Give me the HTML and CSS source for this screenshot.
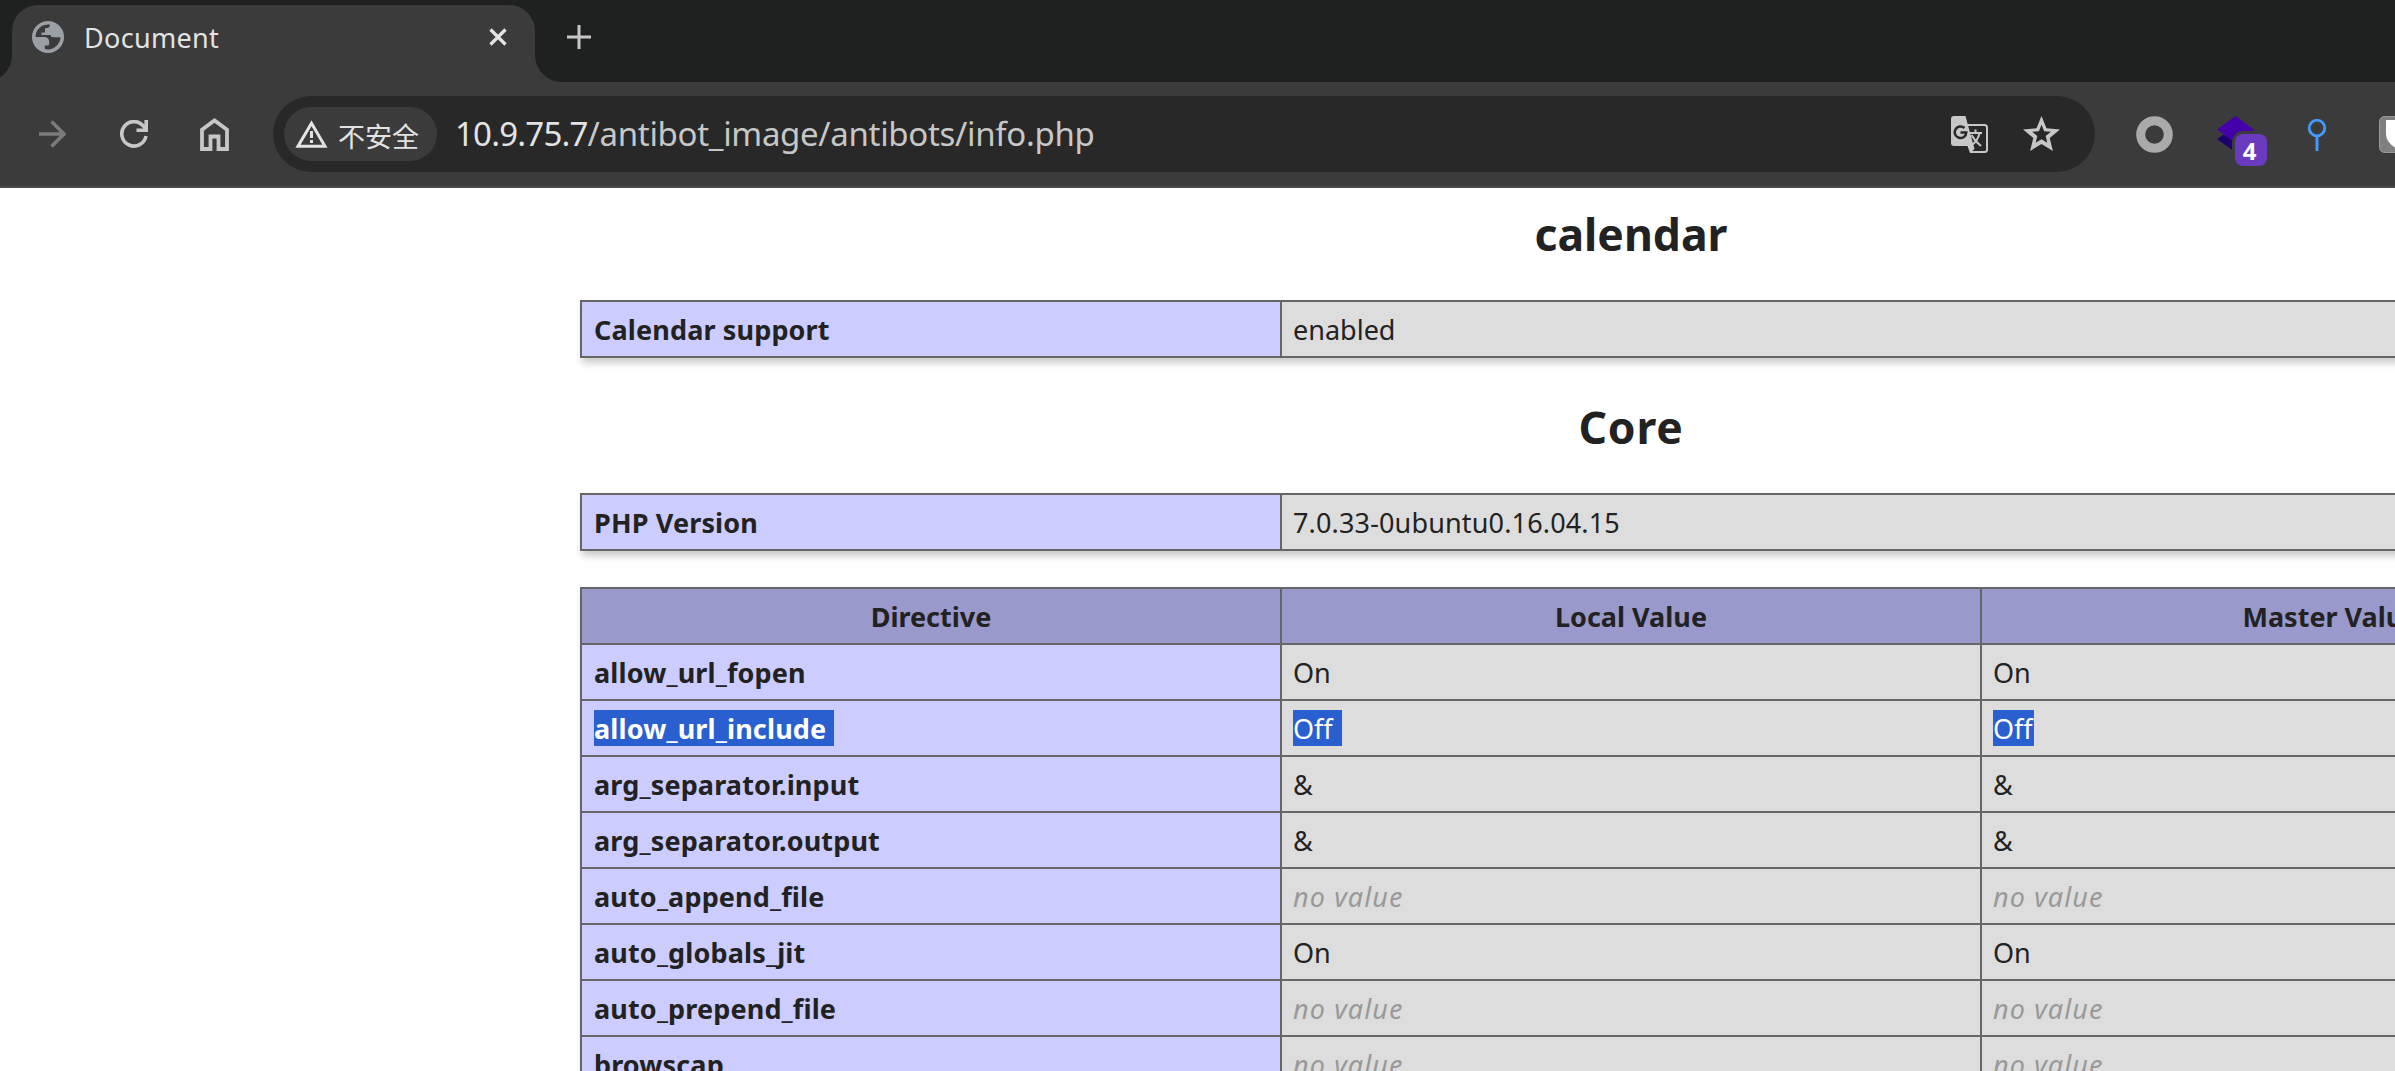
FILE: index.html
```html
<!DOCTYPE html>
<html lang="zh-CN">
<head>
<meta charset="utf-8">
<title>Document</title>
<link rel="stylesheet" href="styles.css">
</head>
<body>
<header class="browser">
  <div class="tabstrip">
    <div class="tab">
      <svg class="favicon" width="32" height="32" viewBox="0 0 32 32"><circle cx="16" cy="16" r="16" fill="#9aa0a6"/><path fill="#3b3b3b" d="M3.5 16A12.6 12.6 0 0 1 17.8 3.5V5.6Q17.5 7 15.5 7H14Q13 7.2 13 8.6V11.4H9.6V14H18.4Q19 16.2 21.5 16.2H28.5A12.6 12.6 0 0 1 12.8 28V24.6H15.6Q17.2 24.4 17.2 22.8V20.6Q17 16.6 12.8 16Z"/><path fill="#9aa0a6" d="M13 11.4H17.5Q19.2 11.6 19.2 14V16H28.5Q28.3 10 24 7L19.4 5.4 17.8 5.6Q17.5 7 15.5 7L13 8Z"/></svg>
      <span class="tab-title">Document</span>
      <svg class="tab-close" width="18" height="18" viewBox="0 0 18 18"><path d="M1.5 1.5l15 15M16.500 1.500l-15 15" stroke="#e3e3e3" stroke-width="3.200"/></svg>
    </div>
    <svg class="new-tab" width="24" height="24" viewBox="0 0 24 24"><path d="M12 0v24M0 12h24" stroke="#c7c7c7" stroke-width="3"/></svg>
  </div>
  <div class="toolbar">
    <svg class="forward" width="28" height="28" viewBox="0 0 28 28"><path d="M1 14h25M13.500 1.500L26 14 13.500 26.500" fill="none" stroke="#7b7b7b" stroke-width="3.600"/></svg>
    <svg class="reload" width="28" height="28" viewBox="0 0 28 28"><path d="M26 16A12.200 12.200 0 1 1 23.500 6.200L26 9.500" fill="none" stroke="#c7c7c7" stroke-width="3.600"/><path d="M28 0V12H16.500V8.600H24.400V0z" fill="#c7c7c7"/></svg>
    <svg class="home" width="29" height="33" viewBox="0 0 29 33"><path d="M2 31V11.700L14.500 2.400 27 11.700V31H18.500V18.500H10.500V31z" fill="none" stroke="#c7c7c7" stroke-width="3.800"/></svg>
    <div class="omnibox">
      <div class="chip">
        <svg width="33" height="28" viewBox="0 0 33 28"><path d="M16.500 3.200L30 26.300H3z" fill="none" stroke="#e3e3e3" stroke-width="3"/><path d="M15 11h3v7h-3zM15 20h3v3h-3z" fill="#e3e3e3"/></svg>
        <span class="chip-text">不安全</span>
      </div>
      <div class="url"><span class="host">10.9.75.7</span><span class="path">/antibot_image/antibots/info.php</span></div>
      <svg class="translate" width="37" height="37" viewBox="0 0 37 37"><path d="M15 9H33.500Q36 9 36 11.500V33.500Q36 36 33.500 36H19" fill="none" stroke="#c7c7c7" stroke-width="2"/><path d="M3 0H14.500L23.500 33 19 37 16.500 30H3Q0 30 0 27V3Q0 0 3 0z" fill="#c7c7c7"/><path d="M13.500 12A5.800 5.800 0 1 0 15.300 16.500H9.500" fill="none" stroke="#282828" stroke-width="2.500"/><path d="M18.500 17H31M24.500 13.500V17M28.500 17.500Q26.500 25 21 29M20.500 19Q24 25.500 30 30" fill="none" stroke="#c7c7c7" stroke-width="2"/></svg>
      <svg class="star" width="37" height="35" viewBox="0 0 37 35"><path fill="#c7c7c7" fill-rule="evenodd" d="M18.500 0L23.500 12.300 37 13.400 26.700 22 29.900 35 18.500 28.100 7.100 35 10.300 22 0 13.400 13.500 12.300zM18.500 8.800L15.900 15.200 9.200 15.700 14.300 20 12.700 26.700 18.500 23.200 24.300 26.700 22.700 20 27.800 15.700 21.100 15.200z"/></svg>
    </div>
    <svg class="ext-ring" width="37" height="37" viewBox="0 0 37 37"><circle cx="18.500" cy="18.500" r="13.800" fill="none" stroke="#aaa" stroke-width="9"/></svg>
    <div class="ext-layers">
      <svg width="37" height="36" viewBox="0 0 37 36"><path d="M0 23L6 19 30 24 18 36z" fill="#1c0070"/><path d="M18.500 0L37 13.500 18.500 27 0 13.500z" fill="#4400aa"/></svg>
      <span class="badge">4</span>
    </div>
    <svg class="ext-pin" width="20" height="34" viewBox="0 0 20 34"><circle cx="10" cy="10" r="7.800" fill="none" stroke="#419bff" stroke-width="2.800"/><path d="M10 18V33" stroke="#419bff" stroke-width="3"/></svg>
    <svg class="ext-shield" width="37" height="37" viewBox="0 0 37 37"><rect x=".5" y=".5" width="36" height="36" rx="5" fill="#808080" stroke="#999"/><path d="M7 4H30V18Q29 27 18.500 33 7 27 7 18z" fill="#fff"/></svg>
  </div>
</header>
<main class="info">
  <h2>calendar</h2>
  <table>
    <tr><td class="e">Calendar support</td><td class="v wide">enabled</td></tr>
  </table>
  <h2 class="core">Core</h2>
  <table>
    <tr><td class="e">PHP Version</td><td class="v wide version">7.0.33-0ubuntu0.16.04.15</td></tr>
  </table>
  <table>
    <tr class="h"><th>Directive</th><th>Local Value</th><th>Master Value</th></tr>
    <tr><td class="e">allow_url_fopen</td><td class="v">On</td><td class="v">On</td></tr>
    <tr><td class="e"><span class="sel sel-name">allow_url_include</span></td><td class="v"><span class="sel sel-value">Off</span></td><td class="v"><span class="sel">Off</span></td></tr>
    <tr><td class="e">arg_separator.input</td><td class="v">&amp;</td><td class="v">&amp;</td></tr>
    <tr><td class="e">arg_separator.output</td><td class="v">&amp;</td><td class="v">&amp;</td></tr>
    <tr><td class="e">auto_append_file</td><td class="v"><i>no value</i></td><td class="v"><i>no value</i></td></tr>
    <tr><td class="e">auto_globals_jit</td><td class="v">On</td><td class="v">On</td></tr>
    <tr><td class="e">auto_prepend_file</td><td class="v"><i>no value</i></td><td class="v"><i>no value</i></td></tr>
    <tr><td class="e">browscap</td><td class="v"><i>no value</i></td><td class="v"><i>no value</i></td></tr>
  </table>
</main>
</body>
</html>
```
FILE: styles.css
```css
* { box-sizing: border-box; }
html, body { height: 100%; }
body {
  margin: 0;
  overflow: hidden;
  background: #fff;
  color: #222;
  font-family: "Noto Sans", "Noto Sans CJK SC", sans-serif;
  font-size: 27px;
}
svg { display: block; flex: none; }

/* Browser chrome */
.tabstrip {
  display: flex;
  height: 82px;
  padding: 5px 0 0 12px;
  background: #1f2120;
  overflow: hidden;
}
.tab {
  position: relative;
  display: flex;
  align-items: center;
  width: 523px;
  height: 77px;
  padding: 0 28px 13px 20px;
  border-radius: 26px 26px 0 0;
  background: #3b3b3b;
}
.tab::before, .tab::after {
  content: "";
  position: absolute;
  bottom: 0;
  width: 27px;
  height: 27px;
}
.tab::before { left: -27px; background: radial-gradient(circle at 0 0, transparent 26.5px, #3b3b3b 27.5px); }
.tab::after { right: -27px; background: radial-gradient(circle at 100% 0, transparent 26.5px, #3b3b3b 27.5px); }
.tab-title {
  flex: 1;
  margin: 2px 0 0 20px;
  color: #e3e3e3;
  line-height: 36px;
  letter-spacing: .3px;
}
.new-tab { margin: 20px 0 0 32px; }
.toolbar {
  display: flex;
  align-items: center;
  height: 106px;
  padding-left: 38px;
  border-bottom: 2px solid #4a4a4a;
  background: #3b3b3b;
}
.reload { margin-left: 54px; }
.home { margin-left: 52px; }
.omnibox {
  display: flex;
  flex: none;
  align-items: center;
  width: 1822px;
  height: 76px;
  margin-left: 44px;
  padding: 0 35px 0 11px;
  border-radius: 38px;
  background: #282828;
}
.chip {
  display: flex;
  align-items: center;
  width: 153px;
  height: 54px;
  padding-left: 11px;
  border-radius: 27px;
  background: #3b3b3b;
}
.chip-text {
  margin: 4px 0 0 10px;
  color: #e3e3e3;
  font-family: "Noto Sans CJK SC", sans-serif;
  line-height: 36px;
  white-space: nowrap;
}
.url {
  flex: 1;
  margin-left: 18px;
  font-size: 33px;
  line-height: 46px;
  white-space: nowrap;
}
.host { color: #e3e3e3; letter-spacing: -.8px; }
.path { color: #c7c7c7; letter-spacing: -.32px; }
.star { margin: 0 0 2px 35px; }
.ext-ring { margin-left: 41px; }
.ext-layers {
  position: relative;
  flex: none;
  width: 50px;
  height: 36px;
  margin-left: 44px;
}
.badge {
  position: absolute;
  left: 18px;
  top: 18px;
  width: 32px;
  height: 32px;
  padding-right: 3px;
  border-radius: 8px;
  background: #6a3bbf;
  box-shadow: 0 0 0 3px #3b3b3b;
  color: #fff;
  font-size: 24px;
  font-weight: 700;
  line-height: 33px;
  text-align: center;
}
.ext-pin { margin: 2px 0 0 40px; }
.ext-shield { margin-left: 52px; }

/* phpinfo page */
.info { width: 2102px; margin-left: 580px; padding-top: 16px; }
h2 {
  margin: 0 0 36px;
  font-size: 44.5px;
  line-height: 60px;
  text-align: center;
}
.core { letter-spacing: .8px; }
table {
  width: 2102px;
  margin-bottom: 36px;
  border-collapse: collapse;
  table-layout: fixed;
  box-shadow: 2px 5px 7px #ccc;
}
table + h2 { margin-top: 39px; }
td, th {
  width: 700px;
  height: 56px;
  padding: 10px 11px 8px;
  border: 2px solid #666;
  line-height: 36px;
  text-align: left;
}
.wide { width: 1400px; }
.h th { background: #99c; text-align: center; }
.e {
  padding-left: 12px;
  background: #ccf;
  font-weight: 700;
  letter-spacing: .14px;
}
.v { background: #ddd; }
.version { letter-spacing: .15px; }
i { color: #999; letter-spacing: 1.1px; }
.sel {
  display: block;
  width: 41px;
  height: 36px;
  margin: -1px 0 1px;
  padding-top: 1px;
  background: #2a5fd0;
  color: #fff;
}
.sel-name { width: 240px; }
.sel-value { width: 49px; }
```
